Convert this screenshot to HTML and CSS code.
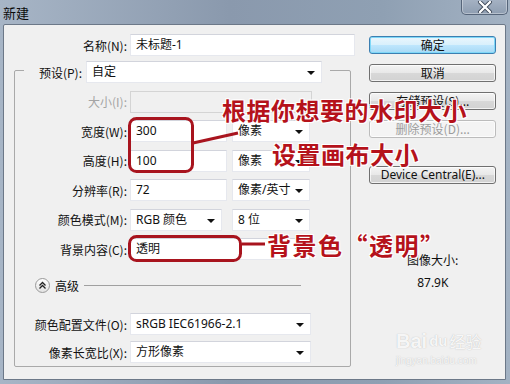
FILE: index.html
```html
<!DOCTYPE html>
<html lang="zh-CN">
<head>
    <meta charset="UTF-8">
    <title>新建</title>
    <link rel="stylesheet" href="styles.css">
</head>
<body>
    <div class="window">
        <div class="titlebar">
            <span class="title">新建</span>
            <div class="close-btn">
                <svg width="16" height="12" viewBox="0 0 16 12">
                    <path d="M3 1 L13 11 M13 1 L3 11" stroke="#3c4656" stroke-width="4" stroke-linecap="round"/>
                    <path d="M3 1 L13 11 M13 1 L3 11" stroke="#ffffff" stroke-width="2.4" stroke-linecap="round"/>
                </svg>
            </div>
        </div>

        <div class="client">
            <div class="main">
                <div class="row name-row">
                    <label class="lbl name-lbl">名称(N):</label>
                    <div class="field name-field">未标题-1</div>
                </div>

                <div class="group">
                    <div class="preset-row">
                        <label class="lbl preset-lbl">预设(P):</label>
                        <div class="field select preset-field">自定</div>
                    </div>
                    <div class="row">
                        <label class="lbl disabled">大小(I):</label>
                        <div class="field field-off size-field"></div>
                    </div>
                    <div class="row">
                        <label class="lbl">宽度(W):</label>
                        <div class="field num-field">300</div>
                        <div class="field select unit-field">像素</div>
                    </div>
                    <div class="row">
                        <label class="lbl">高度(H):</label>
                        <div class="field num-field">100</div>
                        <div class="field select unit-field">像素</div>
                    </div>
                    <div class="row">
                        <label class="lbl">分辨率(R):</label>
                        <div class="field num-field">72</div>
                        <div class="field select unit-field">像素/英寸</div>
                    </div>
                    <div class="row">
                        <label class="lbl">颜色模式(M):</label>
                        <div class="field select mode-field">RGB 颜色</div>
                        <div class="field select bits-field">8 位</div>
                    </div>
                    <div class="row">
                        <label class="lbl">背景内容(C):</label>
                        <div class="field select bg-field">透明</div>
                    </div>

                    <div class="advanced">
                        <span class="toggle">
                            <svg width="9" height="9" viewBox="0 0 9 9">
                                <path d="M1.5 4.5 L4.5 1.5 L7.5 4.5 M1.5 7.5 L4.5 4.5 L7.5 7.5" fill="none" stroke="#222" stroke-width="1.3"/>
                            </svg>
                        </span>
                        <span class="advanced-text">高级</span>
                        <span class="rule"></span>
                    </div>

                    <div class="row profile-row">
                        <label class="lbl">颜色配置文件(O):</label>
                        <div class="field select wide-field">sRGB IEC61966-2.1</div>
                    </div>
                    <div class="row aspect-row">
                        <label class="lbl">像素长宽比(X):</label>
                        <div class="field select wide-field">方形像素</div>
                    </div>
                </div>
            </div>

            <div class="side">
                <div class="btn btn-default">确定</div>
                <div class="btn">取消</div>
                <div class="btn">存储预设(S)...</div>
                <div class="btn btn-off">删除预设(D)...</div>
                <div class="btn btn-device">Device Central(E)...</div>
                <div class="image-size">
                    <div class="image-size-label">图像大小:</div>
                    <div class="image-size-value">87.9K</div>
                </div>
            </div>
        </div>

        <svg class="marks" width="510" height="384" viewBox="0 0 510 384">
            <rect x="129.5" y="118.5" width="63" height="53" rx="7" fill="none" stroke="#a8141e" stroke-width="3"/>
            <line x1="193" y1="143" x2="238" y2="133" stroke="#a8141e" stroke-width="3"/>
            <rect x="129.5" y="236.5" width="111" height="24" rx="7" fill="none" stroke="#a8141e" stroke-width="3"/>
            <line x1="242" y1="244" x2="265" y2="244" stroke="#a8141e" stroke-width="3"/>
        </svg>

        <div class="note note-one">根据你想要的水印大小</div>
        <div class="note note-two">设置画布大小</div>
        <div class="note note-three">背景色“透明”</div>

        <div class="watermark">
            <div class="wm-top">
                <span class="wm-bai">Bai</span>
                <span class="wm-paw">du</span>
                <span class="wm-cn">经验</span>
            </div>
            <div class="wm-url">jingyan.baidu.com</div>
        </div>
    </div>
</body>
</html>
```

FILE: styles.css
```css
* {
    margin: 0;
    padding: 0;
    box-sizing: border-box;
}

body {
    font-family: "Noto Sans", "Noto Sans CJK SC", sans-serif;
    font-size: 12px;
    color: #111;
    background-color: #ffffff;
}

.window {
    position: relative;
    width: 510px;
    height: 384px;
    overflow: hidden;
    background: linear-gradient(to right, #a7b5c6 0%, #8a99ad 45%, #8fa0b3 75%, #a3b2c3 100%);
}

.titlebar {
    height: 24px;
    display: flex;
    justify-content: space-between;
    align-items: flex-start;
}

.title {
    font-family: "Noto Sans CJK SC", sans-serif;
    font-size: 13px;
    line-height: 13px;
    margin: 6px 0 0 3px;
    color: #0c0c0c;
}

.close-btn {
    width: 47px;
    height: 16px;
    margin: -1px 2px 0 0;
    border: 1px solid #56657a;
    border-top: none;
    border-radius: 0 0 5px 5px;
    background: linear-gradient(to bottom, #a6b3c4, #8e9db1);
    box-shadow: inset 0 0 0 1px rgba(255, 255, 255, 0.35);
    display: flex;
    justify-content: center;
    align-items: center;
}

.client {
    height: 356px;
    margin: 0 4px 0 3px;
    border: 1px solid #6c7888;
    border-radius: 2px 2px 0 0;
    background-color: #f0f0f0;
    display: flex;
}

.main {
    width: 352px;
}

.row {
    display: flex;
    align-items: center;
    height: 22px;
    margin-top: 7.5px;
}

.lbl {
    width: 112px;
    margin-right: 3px;
    text-align: right;
    white-space: nowrap;
    font-family: "Noto Sans CJK SC", sans-serif;
}

.lbl.disabled {
    color: #a4a4a4;
}

.name-row {
    margin-top: 9px;
}

.name-lbl {
    width: 123px;
}

.field {
    position: relative;
    height: 22px;
    line-height: 20px;
    padding-left: 5px;
    background-color: #ffffff;
    border: 1px solid #e6e8ee;
    border-top-color: #d2d4dc;
    white-space: nowrap;
    font-family: "Noto Sans", "Noto Sans CJK SC", sans-serif;
}

.select::after {
    content: "";
    position: absolute;
    right: 6px;
    top: 9px;
    border-left: 4px solid transparent;
    border-right: 4px solid transparent;
    border-top: 4px solid #111;
}

.field-off {
    background-color: #f0f0f0;
    border-color: #d4d4d4;
}

.name-field {
    width: 225px;
}

.group {
    margin: 14px 0 0 10px;
    width: 337px;
    height: 297px;
    border: 1px solid #a9a9a9;
    border-radius: 2px;
}

.preset-row {
    display: flex;
    align-items: center;
    width: 306px;
    height: 22px;
    margin: -10px 0 0 9px;
    background-color: #f0f0f0;
}

.preset-lbl {
    width: 58px;
    margin-right: 4px;
}

.preset-field {
    width: 236px;
}

.size-field {
    width: 182px;
}

.num-field {
    width: 97px;
}

.unit-field {
    width: 78px;
    margin-left: 5px;
}

.mode-field {
    width: 92px;
}

.bits-field {
    width: 78px;
    margin-left: 10px;
}

.bg-field {
    width: 180px;
}

.wide-field {
    width: 181px;
}

.advanced {
    display: flex;
    align-items: center;
    height: 16px;
    margin-top: 17px;
    padding-left: 20px;
}

.toggle {
    width: 15px;
    height: 15px;
    border: 1px solid #9a9a9a;
    border-radius: 50%;
    background: linear-gradient(to bottom, #ffffff, #e2e2e2);
    display: flex;
    justify-content: center;
    align-items: center;
}

.advanced-text {
    margin-left: 5px;
    font-family: "Noto Sans CJK SC", sans-serif;
}

.rule {
    flex: none;
    width: 217px;
    height: 1px;
    margin-left: 5px;
    background-color: #a0a0a0;
}

.profile-row {
    margin-top: 20px;
}

.aspect-row {
    margin-top: 6px;
}

.side {
    width: 150px;
    padding: 11px 0 0 14px;
    display: flex;
    flex-direction: column;
}

.btn {
    width: 127px;
    height: 18px;
    margin-bottom: 10px;
    border: 1px solid #707070;
    border-radius: 3px;
    background: linear-gradient(to bottom, #f4f4f4 0%, #e8e8e8 48%, #d8d8d8 52%, #d2d2d2 100%);
    text-align: center;
    line-height: 16px;
    font-family: "Noto Sans CJK SC", sans-serif;
    box-shadow: inset 0 0 0 1px rgba(255, 255, 255, 0.7);
}

.btn-default {
    border-color: #3c7fb1;
    background: linear-gradient(to bottom, #eaf6fd 0%, #d9f0fc 48%, #bee6fd 52%, #a7d9f5 100%);
    box-shadow: inset 0 0 0 1px #7fd8f8;
}

.btn-off {
    color: #9c9c9c;
    border-color: #bcbcbc;
    background: #f4f4f4;
}

.btn-device {
    margin-top: 18px;
    font-family: "Noto Sans", sans-serif;
}

.image-size {
    margin-top: 59px;
    width: 127px;
    text-align: center;
}

.image-size-label {
    line-height: 14px;
    font-family: "Noto Sans CJK SC", sans-serif;
}

.image-size-value {
    margin-top: 9px;
    line-height: 14px;
}

.marks {
    position: absolute;
    top: 0;
    left: 0;
    pointer-events: none;
}

.note {
    position: absolute;
    font-family: "Noto Sans CJK SC", sans-serif;
    font-weight: bold;
    font-size: 24px;
    line-height: 24px;
    letter-spacing: 0.5px;
    color: #b5121b;
    white-space: nowrap;
    text-shadow: 1px 1px 0 #fff, -1px -1px 0 #fff, 1px -1px 0 #fff, -1px 1px 0 #fff;
}

.note-one {
    left: 222px;
    top: 98px;
}

.note-two {
    left: 272px;
    top: 142px;
}

.note-three {
    left: 267px;
    top: 233px;
    letter-spacing: 1.5px;
}

.watermark {
    position: absolute;
    left: 396px;
    top: 324px;
    color: rgba(255, 255, 255, 0.9);
    text-shadow: 0 0 1px rgba(120, 120, 120, 0.5);
}

.wm-top {
    display: flex;
    align-items: flex-end;
    height: 28px;
}

.wm-bai {
    font-family: "Liberation Sans", sans-serif;
    font-weight: bold;
    font-size: 20px;
    line-height: 22px;
}

.wm-paw {
    font-family: "Liberation Sans", sans-serif;
    font-weight: bold;
    font-size: 15px;
    line-height: 22px;
    padding: 0 2px;
    border-radius: 50%;
}

.wm-cn {
    font-family: "Noto Sans CJK SC", sans-serif;
    font-size: 16px;
    line-height: 22px;
}

.wm-url {
    font-family: "Liberation Sans", sans-serif;
    font-size: 10px;
    line-height: 12px;
    margin-top: 3px;
}
```
